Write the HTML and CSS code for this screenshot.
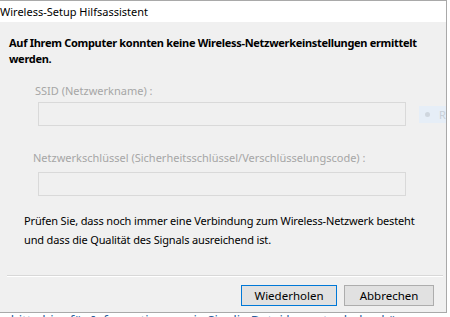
FILE: index.html
```html
<!DOCTYPE html>
<html lang="de">
<head>
<meta charset="utf-8">
<title>Wireless-Setup Hilfsassistent</title>
<link rel="stylesheet" href="styles.css">
</head>
<body>
<div class="screen">
  <div class="dialog">
    <div class="titlebar">Wireless-Setup Hilfsassistent</div>
    <div class="body">
      <p class="heading">Auf Ihrem Computer konnten keine Wireless-Netzwerkeinstellungen ermittelt werden.</p>
      <div class="field field-ssid">
        <div class="field-label">SSID (Netzwerkname) :</div>
        <div class="field-row">
          <div class="input"></div>
          <div class="radio-pill"><span class="dot"></span><span class="pill-text">R</span></div>
        </div>
      </div>
      <div class="field field-key">
        <div class="field-label">Netzwerkschlüssel (Sicherheitsschlüssel/Verschlüsselungscode) :</div>
        <div class="field-row">
          <div class="input"></div>
        </div>
      </div>
      <p class="info">Prüfen Sie, dass noch immer eine Verbindung zum Wireless-Netzwerk besteht und dass die Qualität des Signals ausreichend ist.</p>
    </div>
    <div class="footer">
      <div class="separator"></div>
      <div class="buttons">
        <button class="btn btn-default" type="button">Wiederholen</button>
        <button class="btn" type="button">Abbrechen</button>
      </div>
    </div>
  </div>
  <div class="page-text">e bitte hier für Informationen wie Sie die Datei herunter laden können</div>
</div>
</body>
</html>
```

FILE: styles.css
```css
* { box-sizing: border-box; }
html, body { margin: 0; padding: 0; background: #ffffff; }
body {
  font-family: "Noto Sans", "Open Sans", sans-serif;
  font-size: 11px;
  color: #000;
  width: 450px;
  height: 317px;
  overflow: hidden;
}
.screen { width: 450px; height: 317px; overflow: hidden; }
.dialog {
  width: 447px;
  height: 313px;
  border: 1px solid #a9a9a9;
  border-left: none;
  background: #f0f0f0;
  display: flex;
  flex-direction: column;
  overflow: hidden;
}
.titlebar {
  height: 21px;
  background: #ffffff;
  line-height: 21px;
  font-size: 11px;
  color: #000;
  white-space: nowrap;
}
.body {
  padding: 13px 0 0 9px;
  flex: 1;
}
.heading {
  margin: 0;
  font-weight: bold;
  line-height: 16px;
  width: 420px;
  letter-spacing: -0.3px;
}
.field-ssid { margin-top: 16px; padding-left: 26px; }
.field-key { margin-top: 24px; padding-left: 24px; }
.field-label { color: #a6a6a6; line-height: 16px; white-space: nowrap; }
.field-row { display: flex; align-items: center; margin-top: 6px; }
.field-ssid .field-row { margin-left: 3px; margin-top: 3px; }
.field-key .field-row { margin-left: 5px; }
.input {
  width: 368px;
  height: 24px;
  border: 1px solid #d9d9d9;
  background: #f0f0f0;
  flex-shrink: 0;
}
.radio-pill {
  margin-left: 13px;
  width: 40px;
  height: 17px;
  background: #e6eef7;
  display: flex;
  align-items: center;
  padding-left: 6px;
  gap: 9px;
  flex-shrink: 0;
}
.dot { width: 5px; height: 5px; border-radius: 50%; background: #cfd6de; }
.pill-text { color: #c8d0d8; font-size: 11px; }
.info {
  margin: 15px 0 0 15px;
  line-height: 19px;
  width: 392px;
  letter-spacing: -0.15px;
}
.footer { padding: 0 3px 6px 7px; }
.separator { height: 2px; border-top: 1px solid #d8d8d8; border-bottom: 1px solid #ffffff; }
.buttons {
  display: flex;
  justify-content: flex-end;
  gap: 7px;
  margin-top: 8px;
  padding-right: 9px;
}
.btn {
  font-family: inherit;
  font-size: 11.5px;
  height: 21px;
  padding: 0;
  background: #e1e1e1;
  border: 1px solid #adadad;
  color: #000;
  width: 90px;
}
.btn-default { width: 96px; border: 1px solid #0078d7; }
.page-text {
  color: #2a5f9e;
  font-size: 13px;
  line-height: 14px;
  white-space: nowrap;
  text-decoration: underline;
}
```
